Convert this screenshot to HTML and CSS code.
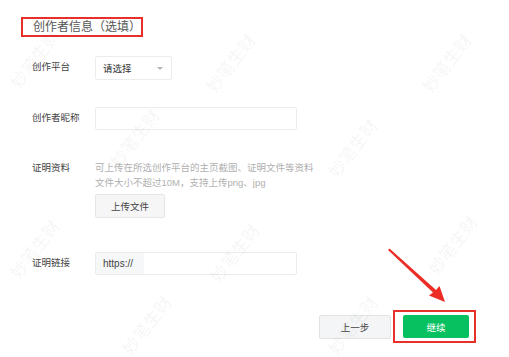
FILE: index.html
```html
<!DOCTYPE html>
<html lang="zh-CN">
<head>
    <meta charset="UTF-8">
    <meta name="viewport" content="width=device-width, initial-scale=1.0">
    <title>创作者信息</title>
    <link rel="stylesheet" href="styles.css">
</head>
<body>
    <div class="page">
        <div class="section-title">创作者信息（选填）</div>

        <div class="form">
            <div class="form-row">
                <label class="form-label">创作平台</label>
                <div class="select">
                    <span>请选择</span>
                    <span class="caret"></span>
                </div>
            </div>
            <div class="form-row">
                <label class="form-label">创作者昵称</label>
                <div class="input"></div>
            </div>
            <div class="form-row upload">
                <label class="form-label">证明资料</label>
                <div class="upload-box">
                    <p class="help">可上传在所选创作平台的主页截图、证明文件等资料</p>
                    <p class="help">文件大小不超过10M，支持上传png、jpg</p>
                    <button class="btn btn-default">上传文件</button>
                </div>
            </div>
            <div class="form-row">
                <label class="form-label">证明链接</label>
                <div class="input-group">
                    <span class="prefix">https://</span>
                    <span class="input-inner"></span>
                </div>
            </div>
        </div>

        <div class="actions">
            <button class="btn btn-default btn-back">上一步</button>
            <div class="highlight">
                <button class="btn btn-primary">继续</button>
            </div>
        </div>

        <svg class="arrow" width="72" height="64" viewBox="0 0 72 64">
            <path d="M8 6 L9.5 4.6 L56 46 L59.5 42 L65 58 L49 51.5 L53 48.5 Z" fill="#ec2d25"/>
        </svg>

        <span class="watermark" style="left: 196px; top: 50px;">妙笔生财</span>
        <span class="watermark" style="left: 318px; top: 135px;">妙笔生财</span>
        <span class="watermark" style="left: 412px; top: 50px;">妙笔生财</span>
        <span class="watermark" style="left: 100px; top: 125px;">妙笔生财</span>
        <span class="watermark" style="left: 0px; top: 236px;">妙笔生财</span>
        <span class="watermark" style="left: 200px; top: 240px;">妙笔生财</span>
        <span class="watermark" style="left: 418px; top: 232px;">妙笔生财</span>
        <span class="watermark" style="left: 112px; top: 312px;">妙笔生财</span>
        <span class="watermark" style="left: 318px; top: 312px;">妙笔生财</span>
        <span class="watermark" style="left: 0px; top: 46px;">妙笔生财</span>
    </div>
</body>
</html>
```

FILE: styles.css
```css
body {
    margin: 0;
    background-color: #fff;
    font-family: "Liberation Sans", "Noto Sans CJK SC", sans-serif;
    color: #333;
}
.page {
    position: relative;
    height: 357px;
    overflow: hidden;
    padding-top: 17px;
    box-sizing: border-box;
}
.section-title {
    width: 122px;
    height: 20px;
    margin-left: 21px;
    padding-left: 10px;
    box-sizing: border-box;
    border: 2px solid #e8302a;
    font-size: 12px;
    line-height: 16px;
    color: #555;
}
.form {
    margin-top: 19px;
    padding-left: 32px;
}
.form-row {
    display: flex;
    align-items: flex-start;
    margin-bottom: 27px;
}
.form-row.upload {
    margin-bottom: 34px;
}
.form-label {
    width: 63px;
    flex-shrink: 0;
    padding-top: 3px;
    font-size: 9.5px;
    line-height: 15px;
    color: #444;
}
.select {
    width: 77px;
    height: 24px;
    box-sizing: border-box;
    border: 1px solid #ececec;
    border-radius: 2px;
    display: flex;
    align-items: center;
    justify-content: space-between;
    padding: 0 8px 0 7px;
    font-size: 9.5px;
    color: #333;
}
.caret {
    width: 0;
    height: 0;
    border-left: 3px solid transparent;
    border-right: 3px solid transparent;
    border-top: 3px solid #b5b5b5;
}
.input {
    width: 202px;
    height: 23px;
    box-sizing: border-box;
    border: 1px solid #ececec;
    border-radius: 2px;
}
.upload-box {
    display: flex;
    flex-direction: column;
    align-items: flex-start;
}
.help {
    margin: 0;
    font-size: 9.5px;
    line-height: 15px;
    color: #b0b0b0;
    white-space: nowrap;
}
.help:first-child {
    padding-top: 3px;
}
.btn {
    font-family: inherit;
    font-size: 9.5px;
    border-radius: 2px;
    cursor: pointer;
}
.btn-default {
    background-color: #f6f6f6;
    border: 1px solid #e6e6e6;
    color: #444;
}
.upload-box .btn {
    margin-top: 4px;
    width: 70px;
    height: 24px;
}
.input-group {
    display: flex;
    width: 202px;
    height: 23px;
    box-sizing: border-box;
    border: 1px solid #ececec;
    border-radius: 2px;
}
.prefix {
    width: 48px;
    background-color: #f6f7f8;
    font-size: 10px;
    line-height: 21px;
    padding-left: 7px;
    box-sizing: border-box;
    color: #444;
}
.input-inner {
    flex: 1;
}
.actions {
    display: flex;
    justify-content: flex-end;
    align-items: center;
    gap: 2px;
    margin-top: 35px;
    padding-right: 33px;
}
.btn-back {
    width: 72px;
    height: 24px;
    background-color: #f4f5f6;
    border-color: #e2e2e2;
}
.highlight {
    border: 2px solid #e8302a;
    padding: 3px 5px 3px 8px;
    display: flex;
}
.btn-primary {
    width: 66px;
    height: 23px;
    border: none;
    background-color: #07c160;
    color: #fff;
}
.arrow {
    position: absolute;
    left: 380px;
    top: 244px;
}
.watermark {
    position: absolute;
    font-size: 17px;
    font-weight: bold;
    color: rgba(0, 0, 0, 0.035);
    transform: rotate(-52deg);
    white-space: nowrap;
    pointer-events: none;
}
```
